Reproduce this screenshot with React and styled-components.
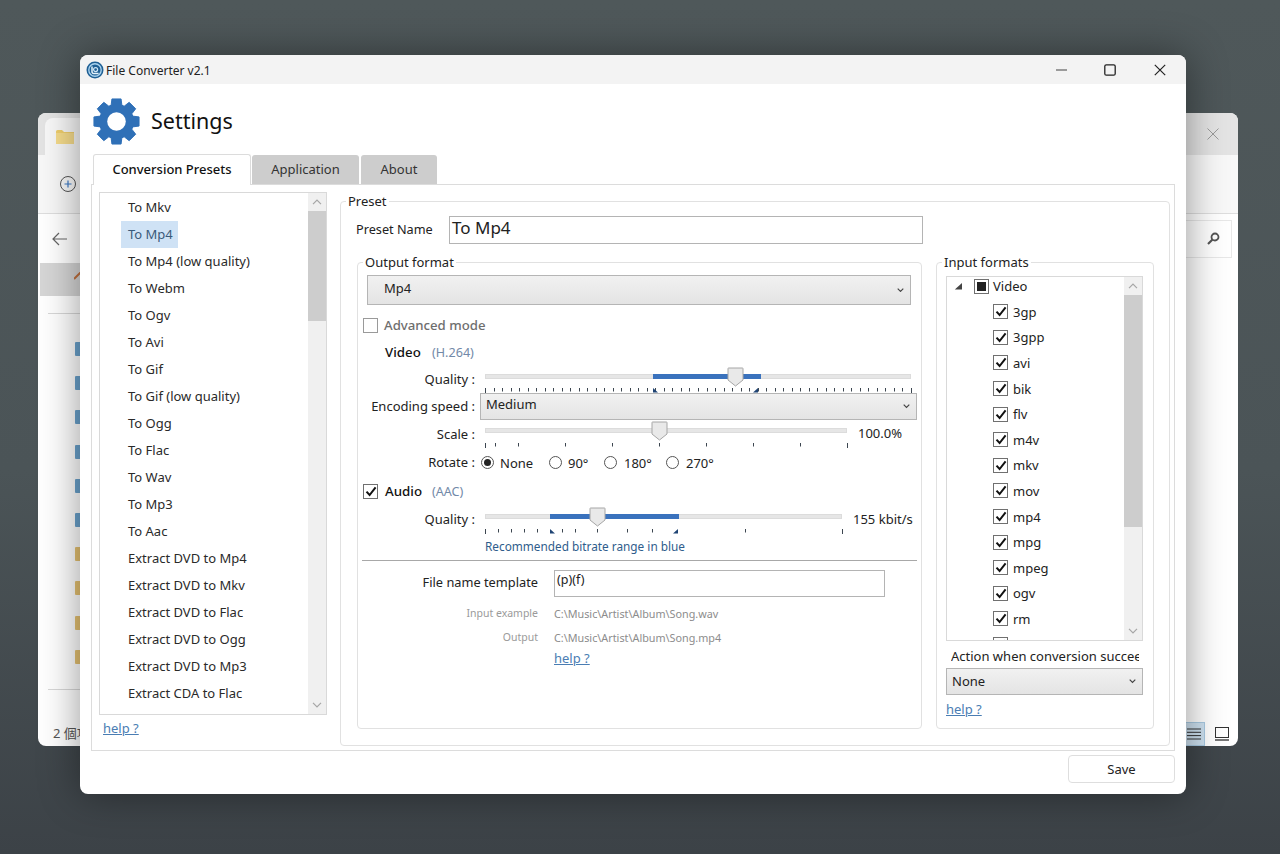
import React from "react";
import styled, { createGlobalStyle } from "styled-components";

const Global = createGlobalStyle`
  * { box-sizing: border-box; }
  html, body { margin: 0; padding: 0; height: 100%; overflow: hidden; }
  body { font-family: "Noto Sans", "Noto Sans CJK TC", sans-serif; font-size: 13px; color: #222; }
`;

const Desktop = styled.div`
  position: relative;
  width: 1280px;
  height: 854px;
  overflow: hidden;
  background: linear-gradient(180deg, #4f585a 0%, #4b5457 55%, #3c4247 100%);
`;

/* ---------- window behind ---------- */
const BackWindow = styled.div`
  position: absolute;
  left: 38px;
  top: 113px;
  width: 1200px;
  height: 633px;
  border-radius: 8px;
  overflow: hidden;
  background: #fff;
  display: flex;
  flex-direction: column;
`;
const BackStrip = styled.div`
  height: 42px;
  background: #e4e4e4;
  display: flex;
  align-items: flex-end;
  justify-content: space-between;
  padding-left: 7px;
`;
const BackTab = styled.div`
  width: 240px;
  height: 37px;
  background: #f8f8f8;
  border-radius: 8px 8px 0 0;
  padding: 12px 0 0 11px;
`;
const BackClose = styled.div`
  width: 50px;
  height: 42px;
  display: flex;
  align-items: center;
  justify-content: center;
`;
const BackToolbar = styled.div`
  height: 59px;
  background: #f8f8f8;
  border-bottom: 1px solid #dedede;
  display: flex;
  align-items: center;
  padding-left: 21px;
`;
const BackAddress = styled.div`
  height: 49px;
  display: flex;
  align-items: center;
  justify-content: space-between;
  padding: 0 6px 0 14px;
`;
const SearchBox = styled.div`
  width: 240px;
  height: 38px;
  border: 1px solid #e8e8e8;
  background: #fff;
  display: flex;
  align-items: center;
  justify-content: flex-end;
  padding-right: 11px;
`;
const BackBody = styled.div`
  flex: 1;
  display: flex;
  flex-direction: column;
`;
const HomeBand = styled.div`
  height: 33px;
  width: 400px;
  margin-left: 2px;
  background: #d6d6d6;
  padding: 9px 0 0 34px;
`;
const BackGap = styled.div`
  height: 17px;
`;
const BackSep = styled.div`
  width: 300px;
  height: 1px;
  margin-left: 10px;
  background: #d8d8d8;
`;
const BackNav = styled.div`
  display: flex;
  flex-direction: column;
  gap: 20.2px;
  padding: 28px 0 0 37px;
  height: 375px;
`;
const NavFolder = styled.div`
  width: 16px;
  height: 14px;
  border-radius: 1px;
  background: ${(p) => (p.$yellow ? "#e6c272" : "#6ba3cd")};
`;
const BackStatus = styled.div`
  flex: 1;
  display: flex;
  align-items: flex-end;
  justify-content: space-between;
  padding: 0 5px 0 15px;
`;
const StatusText = styled.div`
  font-size: 13px;
  color: #555;
  padding-bottom: 4px;
`;
const ViewButtons = styled.div`
  display: flex;
  align-items: center;
  gap: 5px;
  height: 24px;
`;
const ViewButton = styled.div`
  width: 23px;
  height: 24px;
  display: flex;
  align-items: center;
  justify-content: center;
  background: ${(p) => (p.$active ? "#cfe3f2" : "transparent")};
  border: 1px solid ${(p) => (p.$active ? "#a9cbe3" : "transparent")};
`;

/* ---------- main window ---------- */
const Win = styled.div`
  position: absolute;
  left: 80px;
  top: 55px;
  width: 1106px;
  height: 739px;
  border-radius: 8px;
  overflow: hidden;
  background: #fff;
  box-shadow: 0 0 40px rgba(0, 0, 0, 0.42);
  display: flex;
  flex-direction: column;
`;
const TitleBar = styled.div`
  height: 29px;
  flex: none;
  background: #f3f3f3;
  display: flex;
  align-items: center;
  padding: 0 1px 0 6px;
`;
const TitleText = styled.span`
  margin-left: 2px;
  padding-top: 1px;
  font-size: 12px;
  flex: 1;
  color: #222;
`;
const WinBtn = styled.div`
  width: 50px;
  height: 29px;
  display: flex;
  align-items: center;
  justify-content: center;
  padding-left: ${(p) => p.$pl || 0}px;
`;
const Header = styled.div`
  height: 70px;
  flex: none;
  display: flex;
  align-items: center;
  padding: 4px 0 0 13px;
  gap: 11px;
`;
const HeaderTitle = styled.h1`
  margin: -2px 0 0;
  font-size: 21.5px;
  font-weight: 400;
  color: #111;
`;
const TabRow = styled.div`
  height: 30px;
  flex: none;
  display: flex;
  align-items: flex-end;
  gap: 2px;
  padding-left: 13px;
  position: relative;
  z-index: 1;
`;
const Tab = styled.div`
  width: ${(p) => p.$w}px;
  height: ${(p) => (p.$active ? 31 : 29)}px;
  margin-bottom: ${(p) => (p.$active ? -1 : 0)}px;
  margin-right: ${(p) => p.$mr || 0}px;
  padding-bottom: 2px;
  display: flex;
  align-items: center;
  justify-content: center;
  border-radius: 3px 3px 0 0;
  color: ${(p) => (p.$active ? "#111" : "#333")};
  font-weight: ${(p) => (p.$active ? 500 : 400)};
  background: ${(p) => (p.$active ? "#fff" : "#cdcdcd")};
  border: ${(p) => (p.$active ? "1.5px solid #dcdcdc" : "none")};
  border-bottom: none;
`;
const Panel = styled.div`
  margin-left: 11px;
  width: 1084px;
  height: 567px;
  flex: none;
  border: 1.5px solid #dcdcdc;
  display: flex;
  padding: 7px 0 0 7px;
`;
const LeftCol = styled.div`
  width: 228px;
  flex: none;
  margin-right: 13px;
  display: flex;
  flex-direction: column;
`;
const Box = styled.div`
  display: flex;
  border: 1.5px solid #d9d9d9;
  background: #fff;
  overflow: hidden;
  height: ${(p) => p.$h}px;
`;
const PresetItems = styled.div`
  flex: 1;
  padding: 1px 0 0 21px;
`;
const PresetRow = styled.div`
  height: 27px;
`;
const PresetItem = styled.span`
  display: inline-block;
  height: 27px;
  line-height: 26px;
  padding: 0 5px 0 7px;
  background: ${(p) => (p.$selected ? "#cfe2f5" : "transparent")};
  color: ${(p) => (p.$selected ? "#3a5a7a" : "#2a2a2a")};
`;
const Scroll = styled.div`
  width: 18px;
  flex: none;
  background: #f0f0f0;
  display: flex;
  flex-direction: column;
`;
const ScrollArrow = styled.div`
  height: 18px;
  flex: none;
  display: flex;
  align-items: center;
  justify-content: center;
`;
const ScrollTrack = styled.div`
  flex: 1;
`;
const ScrollThumb = styled.div`
  background: #cdcdcd;
  height: ${(p) => p.$h}px;
`;
const HelpLink = styled.a`
  display: block;
  color: #4a7db3;
  text-decoration: underline;
  line-height: 18px;
  margin-top: ${(p) => p.$mt || 0}px;
  margin-left: ${(p) => p.$ml || 0}px;
`;
const Group = styled.fieldset`
  margin: 0;
  padding: 0;
  min-width: 0;
  border: 1.5px solid #e1e1e1;
  border-radius: 4px;
  width: ${(p) => p.$w}px;
  height: ${(p) => p.$h}px;
`;
const GroupLegend = styled.legend`
  margin-left: 5px;
  padding: 0 2px;
  line-height: 18px;
  color: #222;
`;
const PresetNameRow = styled.div`
  display: flex;
  align-items: center;
  padding: 6px 0 0 15px;
`;
const PresetLabel = styled.span`
  width: 93px;
  margin-top: -2px;
  font-size: 12.7px;
`;
const TextField = styled.div`
  width: ${(p) => p.$w}px;
  height: ${(p) => p.$h}px;
  border: 1.5px solid #b4b4b4;
  color: #222;
  font-size: ${(p) => p.$fs}px;
  line-height: ${(p) => p.$lh}px;
  padding-left: 2px;
  background: #fff;
`;
const Columns = styled.div`
  display: flex;
  gap: 14px;
  margin: 9px 0 0 16px;
`;
const Combo = styled.div`
  display: flex;
  align-items: center;
  justify-content: space-between;
  width: ${(p) => p.$w}px;
  height: ${(p) => p.$h}px;
  border: 1.5px solid #b5b5b5;
  background: linear-gradient(180deg, #f1f1f1, #e4e4e4);
  padding: 0 6px 0 ${(p) => p.$pl}px;
  color: #222;
  margin-left: ${(p) => p.$ml || 0}px;
  margin-top: ${(p) => p.$mt || 0}px;
`;
const ComboText = styled.span`
  position: relative;
  top: ${(p) => p.$top}px;
`;
const CheckRow = styled.div`
  display: flex;
  align-items: center;
  height: 18px;
  margin: ${(p) => p.$mt}px 0 0 5px;
`;
const CheckBoxBox = styled.div`
  width: 15px;
  height: 15px;
  flex: none;
  border: 1.5px solid ${(p) => (p.$dim ? "#9a9a9a" : "#707070")};
  background: #fff;
  display: flex;
  align-items: center;
  justify-content: center;
`;
const DimLabel = styled.span`
  margin-left: 6px;
  font-weight: 500;
  font-size: 13.2px;
  color: #6e6e6e;
`;
const StrongLabel = styled.span`
  margin-left: ${(p) => p.$ml}px;
  width: ${(p) => p.$w}px;
  font-weight: 500;
  font-size: 13.3px;
  color: #111;
`;
const CodecText = styled.span`
  color: #7289a8;
  font-size: 12.6px;
`;
const FormRow = styled.div`
  display: grid;
  grid-template-columns: 117px 1fr;
  column-gap: 5px;
  height: ${(p) => p.$h}px;
  margin-top: ${(p) => p.$mt || 0}px;
`;
const RowLabel = styled.div`
  text-align: right;
  line-height: ${(p) => p.$lh}px;
`;
const SliderLine = styled.div`
  display: flex;
  padding-left: 5px;
`;
const SliderBox = styled.div`
  position: relative;
  height: 27px;
  width: ${(p) => p.$w}px;
  padding-top: 8px;
`;
const Track = styled.div`
  position: relative;
  height: 5px;
  background: #e6e6e6;
  border: 1px solid #dcdcdc;
`;
const Range = styled.div`
  position: absolute;
  top: -1px;
  bottom: -1px;
  background: #3a72bd;
`;
const Thumb = styled.svg`
  position: absolute;
  top: 1px;
  margin-left: -8.5px;
`;
const Ticks = styled.svg`
  display: block;
  margin-top: ${(p) => p.$gap}px;
  overflow: visible;
`;
const SliderValue = styled.span`
  margin-left: 11px;
  line-height: 27px;
  white-space: nowrap;
  color: #222;
`;
const RadioGroup = styled.div`
  display: flex;
  align-items: center;
  padding-left: 1px;
`;
const Radio = styled.div`
  width: 13px;
  height: 13px;
  border-radius: 50%;
  border: 1px solid #555;
  display: flex;
  align-items: center;
  justify-content: center;
  &::after {
    content: "";
    width: 7px;
    height: 7px;
    border-radius: 50%;
    background: ${(p) => (p.$on ? "#222" : "transparent")};
  }
`;
const RadioLabel = styled.span`
  margin-left: ${(p) => p.$ml}px;
  width: ${(p) => p.$w}px;
`;
const Recommended = styled.div`
  margin: 4px 0 0 127px;
  line-height: 18px;
  color: #2f5d8c;
  font-size: 11.8px;
`;
const Divider = styled.div`
  margin: 5px 0 0 4px;
  width: 555px;
  height: 1px;
  background: #a8a8a8;
`;
const PathGrid = styled.div`
  display: grid;
  grid-template-columns: 180px 1fr;
  column-gap: 16px;
  align-items: center;
  margin-top: ${(p) => p.$mt}px;
  height: ${(p) => p.$h}px;
`;
const PathLabel = styled.div`
  text-align: right;
  color: ${(p) => (p.$dim ? "#9a9a9a" : "#222")};
  font-size: ${(p) => (p.$dim ? 10.5 : 12.8)}px;
  margin-top: ${(p) => (p.$dim ? 0 : -3)}px;
`;
const PathValue = styled.div`
  color: #8c8c8c;
  font-size: 10.8px;
`;
const RightInner = styled.div`
  padding: 5px 0 0 9px;
  width: 206px;
`;
const TreeItems = styled.div`
  flex: 1;
  height: 100%;
  overflow: hidden;
`;
const TreeRoot = styled.div`
  display: flex;
  align-items: center;
  height: 18px;
  margin-bottom: 4px;
  padding-left: 7px;
`;
const TriState = styled.div`
  width: 15px;
  height: 15px;
  margin-left: 12px;
  border: 1.5px solid #707070;
  display: flex;
  align-items: center;
  justify-content: center;
  &::after {
    content: "";
    width: 9px;
    height: 9px;
    background: #222;
  }
`;
const TreeLabel = styled.span`
  margin-left: ${(p) => p.$ml}px;
`;
const TreeRow = styled.div`
  display: flex;
  align-items: center;
  height: 25.6px;
  padding-left: 46px;
`;
const ActionLabel = styled.div`
  margin: 6px 0 0 5px;
  width: 188px;
  overflow: hidden;
  white-space: nowrap;
  line-height: 18px;
`;
const Footer = styled.div`
  flex: 1;
  display: flex;
  justify-content: flex-end;
  align-items: flex-start;
  padding: 4px 11px 0 0;
`;
const SaveButton = styled.div`
  width: 107px;
  height: 28px;
  border: 1.5px solid #dedede;
  border-radius: 4px;
  display: flex;
  align-items: center;
  justify-content: center;
  color: #222;
`;

/* ---------- drawings ---------- */
const gearPath = (() => {
  const cx = 24, cy = 24, teeth = 8, R = 23.5, r = 17.5;
  const pts = [];
  for (let i = 0; i < teeth; i++) {
    const a = (i / teeth) * Math.PI * 2 - Math.PI / 2;
    const w = 0.2, w2 = 0.32;
    [[-w2, r], [-w, R], [w, R], [w2, r]].forEach(([d, rad]) => {
      pts.push(`${(cx + Math.cos(a + d) * rad).toFixed(2)} ${(cy + Math.sin(a + d) * rad).toFixed(2)}`);
    });
  }
  return "M" + pts.join("L") + "Z";
})();

const Gear = () => (
  <svg width="47" height="47" viewBox="0 0 48 48">
    <path d={gearPath} fill="#2f70b7" stroke="#2f70b7" strokeLinejoin="round" />
    <circle cx="24" cy="24" r="9.5" fill="#fff" />
  </svg>
);

const AppIcon = () => (
  <svg width="18" height="18" viewBox="0 0 18 18">
    <circle cx="9" cy="9" r="8.5" fill="#1e5f94" />
    <circle cx="9" cy="9" r="6.2" fill="none" stroke="#a9d2ee" strokeWidth="1.4" />
    <path d="M6 5.6v5.2a1.6 1.6 0 0 0 1.6 1.6h5" fill="none" stroke="#e6f3fb" strokeWidth="1.5" />
    <circle cx="9.6" cy="8.6" r="2" fill="none" stroke="#cfe6f6" strokeWidth="1.2" />
  </svg>
);

const Chevron = ({ up, color = "#a6a6a6", w = 10, sw = 1.2 }) => (
  <svg width={w} height={w * 0.6} viewBox="0 0 10 6">
    <path d={up ? "M1 5.2 5 1.2l4 4" : "M1 .8l4 4 4-4"} fill="none" stroke={color} strokeWidth={sw} />
  </svg>
);
const ComboChevron = () => <Chevron color="#444" w={7} sw={1.7} />;

const Check = () => (
  <svg width="12" height="11" viewBox="0 0 12 11">
    <path d="M1.5 5.6 4.6 9 10.6 1.4" fill="none" stroke="#111" strokeWidth="2" />
  </svg>
);

const Checkbox = ({ checked, dim }) => (
  <CheckBoxBox $dim={dim}>{checked && <Check />}</CheckBoxBox>
);

const Scrollbar = ({ thumb }) => (
  <Scroll>
    <ScrollArrow><Chevron up /></ScrollArrow>
    <ScrollTrack>
      <ScrollThumb $h={thumb} />
    </ScrollTrack>
    <ScrollArrow><Chevron /></ScrollArrow>
  </Scroll>
);

const Slider = ({ width, from, to, thumb, ticks, marksL = [], marksR = [], gap = 9 }) => (
  <SliderBox $w={width}>
    <Track>
      {from != null && <Range style={{ left: from, width: to - from }} />}
    </Track>
    <Thumb width="17" height="20" viewBox="0 0 17 20" style={{ left: thumb }}>
      <path d="M1.5 1h14a.5.5 0 0 1 .5.5V13l-7.5 6L1 13V1.500a.5.5 0 0 1 .5-.5Z" fill="#e9e9e9" stroke="#a6a6a6" />
    </Thumb>
    <Ticks $gap={gap} width={width} height="5">
      {ticks.map((x) => (
        <rect key={x} x={x} y="0" width="1" height={x === 0 || x === width ? 5 : 3.5} fill="#3c4650" />
      ))}
      {marksL.map((x) => (
        <path key={x} d={`M${x} 0v4.500h5Z`} fill="#1f4474" />
      ))}
      {marksR.map((x) => (
        <path key={x} d={`M${x} 0v4.500h-5Z`} fill="#1f4474" />
      ))}
    </Ticks>
  </SliderBox>
);

const presets = [
  "To Mkv", "To Mp4", "To Mp4 (low quality)", "To Webm", "To Ogv", "To Avi", "To Gif",
  "To Gif (low quality)", "To Ogg", "To Flac", "To Wav", "To Mp3", "To Aac",
  "Extract DVD to Mp4", "Extract DVD to Mkv", "Extract DVD to Flac", "Extract DVD to Ogg",
  "Extract DVD to Mp3", "Extract CDA to Flac",
];
const formats = ["3gp", "3gpp", "avi", "bik", "flv", "m4v", "mkv", "mov", "mp4", "mpg", "mpeg", "ogv", "rm"];
const videoTicks = Array.from({ length: 51 }, (_, i) => Math.round(i * 8.52));

const BackBehind = () => (
  <BackWindow>
    <BackStrip>
      <BackTab>
        <svg width="18" height="14" viewBox="0 0 18 14">
          <path d="M0 1.500A1.500 1.500 0 0 1 1.500 0H6l2 2h10v12H0Z" fill="#f0cf6d" />
          <rect y="3" width="18" height="11" fill="#f6dc8c" />
        </svg>
      </BackTab>
      <BackClose>
        <svg width="12" height="12" viewBox="0 0 12 12">
          <path d="M.5.5l11 11M11.500.5l-11 11" stroke="#9a9a9a" strokeWidth="1" />
        </svg>
      </BackClose>
    </BackStrip>
    <BackToolbar>
      <svg width="18" height="18" viewBox="0 0 18 18">
        <circle cx="9" cy="9" r="7.500" fill="none" stroke="#555" />
        <path d="M9 5.500v7M5.500 9h7" stroke="#3b78c4" strokeWidth="1.2" />
      </svg>
    </BackToolbar>
    <BackAddress>
      <svg width="16" height="14" viewBox="0 0 16 14">
        <path d="M15 7H1.500M7 1 1 7l6 6" fill="none" stroke="#666" strokeWidth="1.200" />
      </svg>
      <SearchBox>
        <svg width="13" height="13" viewBox="0 0 13 13">
          <circle cx="8" cy="5" r="3.500" fill="none" stroke="#555" strokeWidth="1.800" />
          <path d="M5.500 7.500 1 12" stroke="#555" strokeWidth="2.200" />
        </svg>
      </SearchBox>
    </BackAddress>
    <BackBody>
      <HomeBand>
        <svg width="12" height="14" viewBox="0 0 12 14">
          <path d="M0 7 6 1l6 6" fill="none" stroke="#c2703d" strokeWidth="2" />
        </svg>
      </HomeBand>
      <BackGap />
      <BackSep />
      <BackNav>
        {[0, 0, 0, 0, 0, 0, 1, 1, 1, 1].map((y, i) => (
          <NavFolder key={i} $yellow={!!y} />
        ))}
      </BackNav>
      <BackSep />
      <BackStatus>
        <StatusText>2 個項目</StatusText>
        <ViewButtons>
          <ViewButton $active>
            <svg width="14" height="12" viewBox="0 0 14 12">
              <path d="M0 1h14M0 4.300h14M0 7.600h14M0 11h14" stroke="#333" />
            </svg>
          </ViewButton>
          <ViewButton>
            <svg width="14" height="14" viewBox="0 0 14 14">
              <rect x=".5" y=".5" width="13" height="10" fill="none" stroke="#333" />
              <path d="M0 13h14" stroke="#777" strokeWidth="2" />
            </svg>
          </ViewButton>
        </ViewButtons>
      </BackStatus>
    </BackBody>
  </BackWindow>
);

export default function App() {
  return (
    <Desktop>
      <Global />
      <BackBehind />
      <Win>
        <TitleBar>
          <AppIcon />
          <TitleText>File Converter v2.1</TitleText>
          <WinBtn $pl={4}>
            <svg width="12" height="2" viewBox="0 0 12 2"><path d="M0 1h11" stroke="#444" strokeWidth="1.200" /></svg>
          </WinBtn>
          <WinBtn>
            <svg width="12" height="12" viewBox="0 0 12 12"><rect x=".8" y=".8" width="10.400" height="10.400" rx="1.500" fill="none" stroke="#222" strokeWidth="1.300" /></svg>
          </WinBtn>
          <WinBtn>
            <svg width="12" height="12" viewBox="0 0 12 12"><path d="M.8.8l10.400 10.400M11.200.8.8 11.200" stroke="#222" strokeWidth="1.200" /></svg>
          </WinBtn>
        </TitleBar>
        <Header>
          <Gear />
          <HeaderTitle>Settings</HeaderTitle>
        </Header>
        <TabRow>
          <Tab $active $w={158} $mr={-1}>Conversion Presets</Tab>
          <Tab $w={107}>Application</Tab>
          <Tab $w={76}>About</Tab>
        </TabRow>
        <Panel>
          <LeftCol>
            <Box $h={523}>
              <PresetItems>
                {presets.map((p, i) => (
                  <PresetRow key={p}>
                    <PresetItem $selected={i === 1}>{p}</PresetItem>
                  </PresetRow>
                ))}
              </PresetItems>
              <Scrollbar thumb={110} />
            </Box>
            <HelpLink $mt={4} $ml={4}>help ?</HelpLink>
          </LeftCol>
          <Group $w={830} $h={554}>
            <GroupLegend>Preset</GroupLegend>
            <PresetNameRow>
              <PresetLabel>Preset Name</PresetLabel>
              <TextField $w={474} $h={28} $fs={17} $lh={22}>To Mp4</TextField>
            </PresetNameRow>
            <Columns>
              <Group $w={565} $h={476}>
                <GroupLegend>Output format</GroupLegend>
                <Combo $w={544} $h={30} $pl={16} $ml={9} $mt={4}>
                  <ComboText $top={-2}>Mp4</ComboText>
                  <ComboChevron />
                </Combo>
                <CheckRow $mt={11}>
                  <Checkbox dim />
                  <DimLabel>Advanced mode</DimLabel>
                </CheckRow>
                <CheckRow $mt={9}>
                  <StrongLabel $ml={22} $w={47}>Video</StrongLabel>
                  <CodecText>(H.264)</CodecText>
                </CheckRow>
                <FormRow $h={27} $mt={5}>
                  <RowLabel $lh={26}>Quality :</RowLabel>
                  <SliderLine>
                    <Slider width={426} from={167} to={275} thumb={250} ticks={videoTicks} marksL={[168]} marksR={[273]} gap={9} />
                  </SliderLine>
                </FormRow>
                <FormRow $h={27}>
                  <RowLabel $lh={27}>Encoding speed :</RowLabel>
                  <Combo $w={437} $h={27} $pl={5}>
                    <ComboText $top={-3}>Medium</ComboText>
                    <ComboChevron />
                  </Combo>
                </FormRow>
                <FormRow $h={28}>
                  <RowLabel $lh={28}>Scale :</RowLabel>
                  <SliderLine>
                    <Slider width={362} thumb={174} ticks={[0, 10, 33, 80, 127, 174, 221, 268, 315, 362]} gap={10} />
                    <SliderValue>100.0%</SliderValue>
                  </SliderLine>
                </FormRow>
                <FormRow $h={29}>
                  <RowLabel $lh={29}>Rotate :</RowLabel>
                  <RadioGroup>
                    <Radio $on />
                    <RadioLabel $ml={6} $w={49}>None</RadioLabel>
                    <Radio />
                    <RadioLabel $ml={6} $w={36}>90°</RadioLabel>
                    <Radio />
                    <RadioLabel $ml={7} $w={42}>180°</RadioLabel>
                    <Radio />
                    <RadioLabel $ml={7} $w={40}>270°</RadioLabel>
                  </RadioGroup>
                </FormRow>
                <CheckRow $mt={5}>
                  <Checkbox checked />
                  <StrongLabel $ml={7} $w={47}>Audio</StrongLabel>
                  <CodecText>(AAC)</CodecText>
                </CheckRow>
                <FormRow $h={27} $mt={6}>
                  <RowLabel $lh={27}>Quality :</RowLabel>
                  <SliderLine>
                    <Slider width={357} from={64} to={193} thumb={112} ticks={[0, 13, 26, 39, 52, 77, 90, 112, 142, 167, 260, 357]} marksL={[65]} marksR={[193]} gap={10} />
                    <SliderValue>155 kbit/s</SliderValue>
                  </SliderLine>
                </FormRow>
                <Recommended>Recommended bitrate range in blue</Recommended>
                <Divider />
                <PathGrid $mt={9} $h={27}>
                  <PathLabel>File name template</PathLabel>
                  <TextField $w={331} $h={27} $fs={12.5} $lh={18}>(p)(f)</TextField>
                </PathGrid>
                <PathGrid $mt={7} $h={18}>
                  <PathLabel $dim>Input example</PathLabel>
                  <PathValue>C:\Music\Artist\Album\Song.wav</PathValue>
                </PathGrid>
                <PathGrid $mt={6} $h={18}>
                  <PathLabel $dim>Output</PathLabel>
                  <PathValue>C:\Music\Artist\Album\Song.mp4</PathValue>
                </PathGrid>
                <HelpLink $mt={3} $ml={196}>help ?</HelpLink>
              </Group>
              <Group $w={218} $h={476}>
                <GroupLegend>Input formats</GroupLegend>
                <RightInner>
                  <Box $h={365}>
                    <TreeItems>
                      <TreeRoot>
                        <svg width="8" height="8" viewBox="0 0 8 8"><path d="M8 1v6.500H.8Z" fill="#444" /></svg>
                        <TriState />
                        <TreeLabel $ml={4}>Video</TreeLabel>
                      </TreeRoot>
                      {formats.map((f) => (
                        <TreeRow key={f}>
                          <Checkbox checked />
                          <TreeLabel $ml={5}>{f}</TreeLabel>
                        </TreeRow>
                      ))}
                      <TreeRow>
                        <Checkbox checked />
                      </TreeRow>
                    </TreeItems>
                    <Scrollbar thumb={232} />
                  </Box>
                  <ActionLabel>Action when conversion succeeds</ActionLabel>
                  <Combo $w={197} $h={27} $pl={5} $mt={3}>
                    <ComboText $top={-1}>None</ComboText>
                    <ComboChevron />
                  </Combo>
                  <HelpLink $mt={5}>help ?</HelpLink>
                </RightInner>
              </Group>
            </Columns>
          </Group>
        </Panel>
        <Footer>
          <SaveButton>Save</SaveButton>
        </Footer>
      </Win>
    </Desktop>
  );
}
